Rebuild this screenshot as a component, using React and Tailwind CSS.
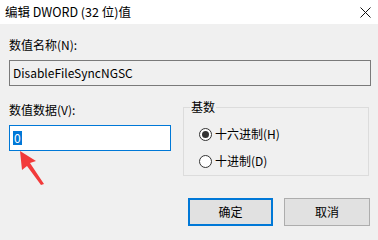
const FONT = { fontFamily: '"Noto Sans CJK SC", "Noto Sans", sans-serif' };

function Radio({ checked, label }) {
  return (
    <div className="flex items-center gap-[3px] h-[14px]">
      <span className="w-[13px] h-[13px] rounded-full border border-[#333] bg-white flex items-center justify-center">
        {checked && <span className="w-[7px] h-[7px] rounded-full bg-[#333]" />}
      </span>
      <span className="text-[12px] leading-none text-black">{label}</span>
    </div>
  );
}

function Arrow() {
  return (
    <svg className="absolute left-[18px] top-[150px]" width="30" height="36" viewBox="0 0 30 36">
      <polygon points="2,1 18,11 12,13 26,34 23,35 9,16 4,20" fill="#f23a3a" />
    </svg>
  );
}

export default function App() {
  return (
    <div className="w-[378px] h-[240px] bg-[#f0f0f0] relative overflow-hidden" style={FONT}>
      {/* title bar */}
      <div className="h-[24px] bg-white flex items-center justify-between pl-[5px] pr-[6px]">
        <span className="text-[12.5px] leading-none text-black">编辑 DWORD (32 位)值</span>
        <svg width="11" height="11" viewBox="0 0 11 11" className="mr-[1px]">
          <path d="M0.5 0.5 L10.5 10.5 M10.5 0.5 L0.5 10.5" stroke="#111" strokeWidth="1" />
        </svg>
      </div>

      <div className="px-[9px] pt-[15px]">
        <div className="text-[12px] leading-none text-black">数值名称(N):</div>
        <div className="mt-[9px] h-[26px] w-[362px] border border-[#7a7a7a] bg-[#f0f0f0] flex items-center px-[3px]">
          <span className="text-[12px] leading-none text-black">DisableFileSyncNGSC</span>
        </div>

        <div className="flex mt-[17px]">
          <div className="w-[162px]">
            <div className="text-[12px] leading-none text-black pt-[1px]">数值数据(V):</div>
            <div className="mt-[9px] h-[26px] w-[162px] border border-[#0078d7] bg-white flex items-center px-[3px]">
              <span className="bg-[#0078d7] text-white text-[12px] leading-[14px] px-[1px]">0</span>
            </div>
          </div>

          <div className="ml-[12px] relative w-[188px] h-[75px] mt-[-2px]">
            <div className="absolute left-0 right-0 top-[6px] bottom-0 border border-[#dcdcdc]" />
            <span className="absolute left-[7px] top-0 bg-[#f0f0f0] px-[1px] text-[12px] leading-none text-black">基数</span>
            <div className="absolute left-[16px] top-[26px] flex flex-col gap-[13px]">
              <Radio checked label="十六进制(H)" />
              <Radio label="十进制(D)" />
            </div>
          </div>
        </div>
      </div>

      <div className="absolute top-[198px] right-[8px] flex gap-[11px]">
        <button className="w-[85px] h-[28px] border-2 border-[#0078d7] bg-[#e1e1e1] text-[12px] leading-none text-black">确定</button>
        <button className="w-[86px] h-[28px] border border-[#adadad] bg-[#e1e1e1] text-[12px] leading-none text-black">取消</button>
      </div>

      <Arrow />
    </div>
  );
}
